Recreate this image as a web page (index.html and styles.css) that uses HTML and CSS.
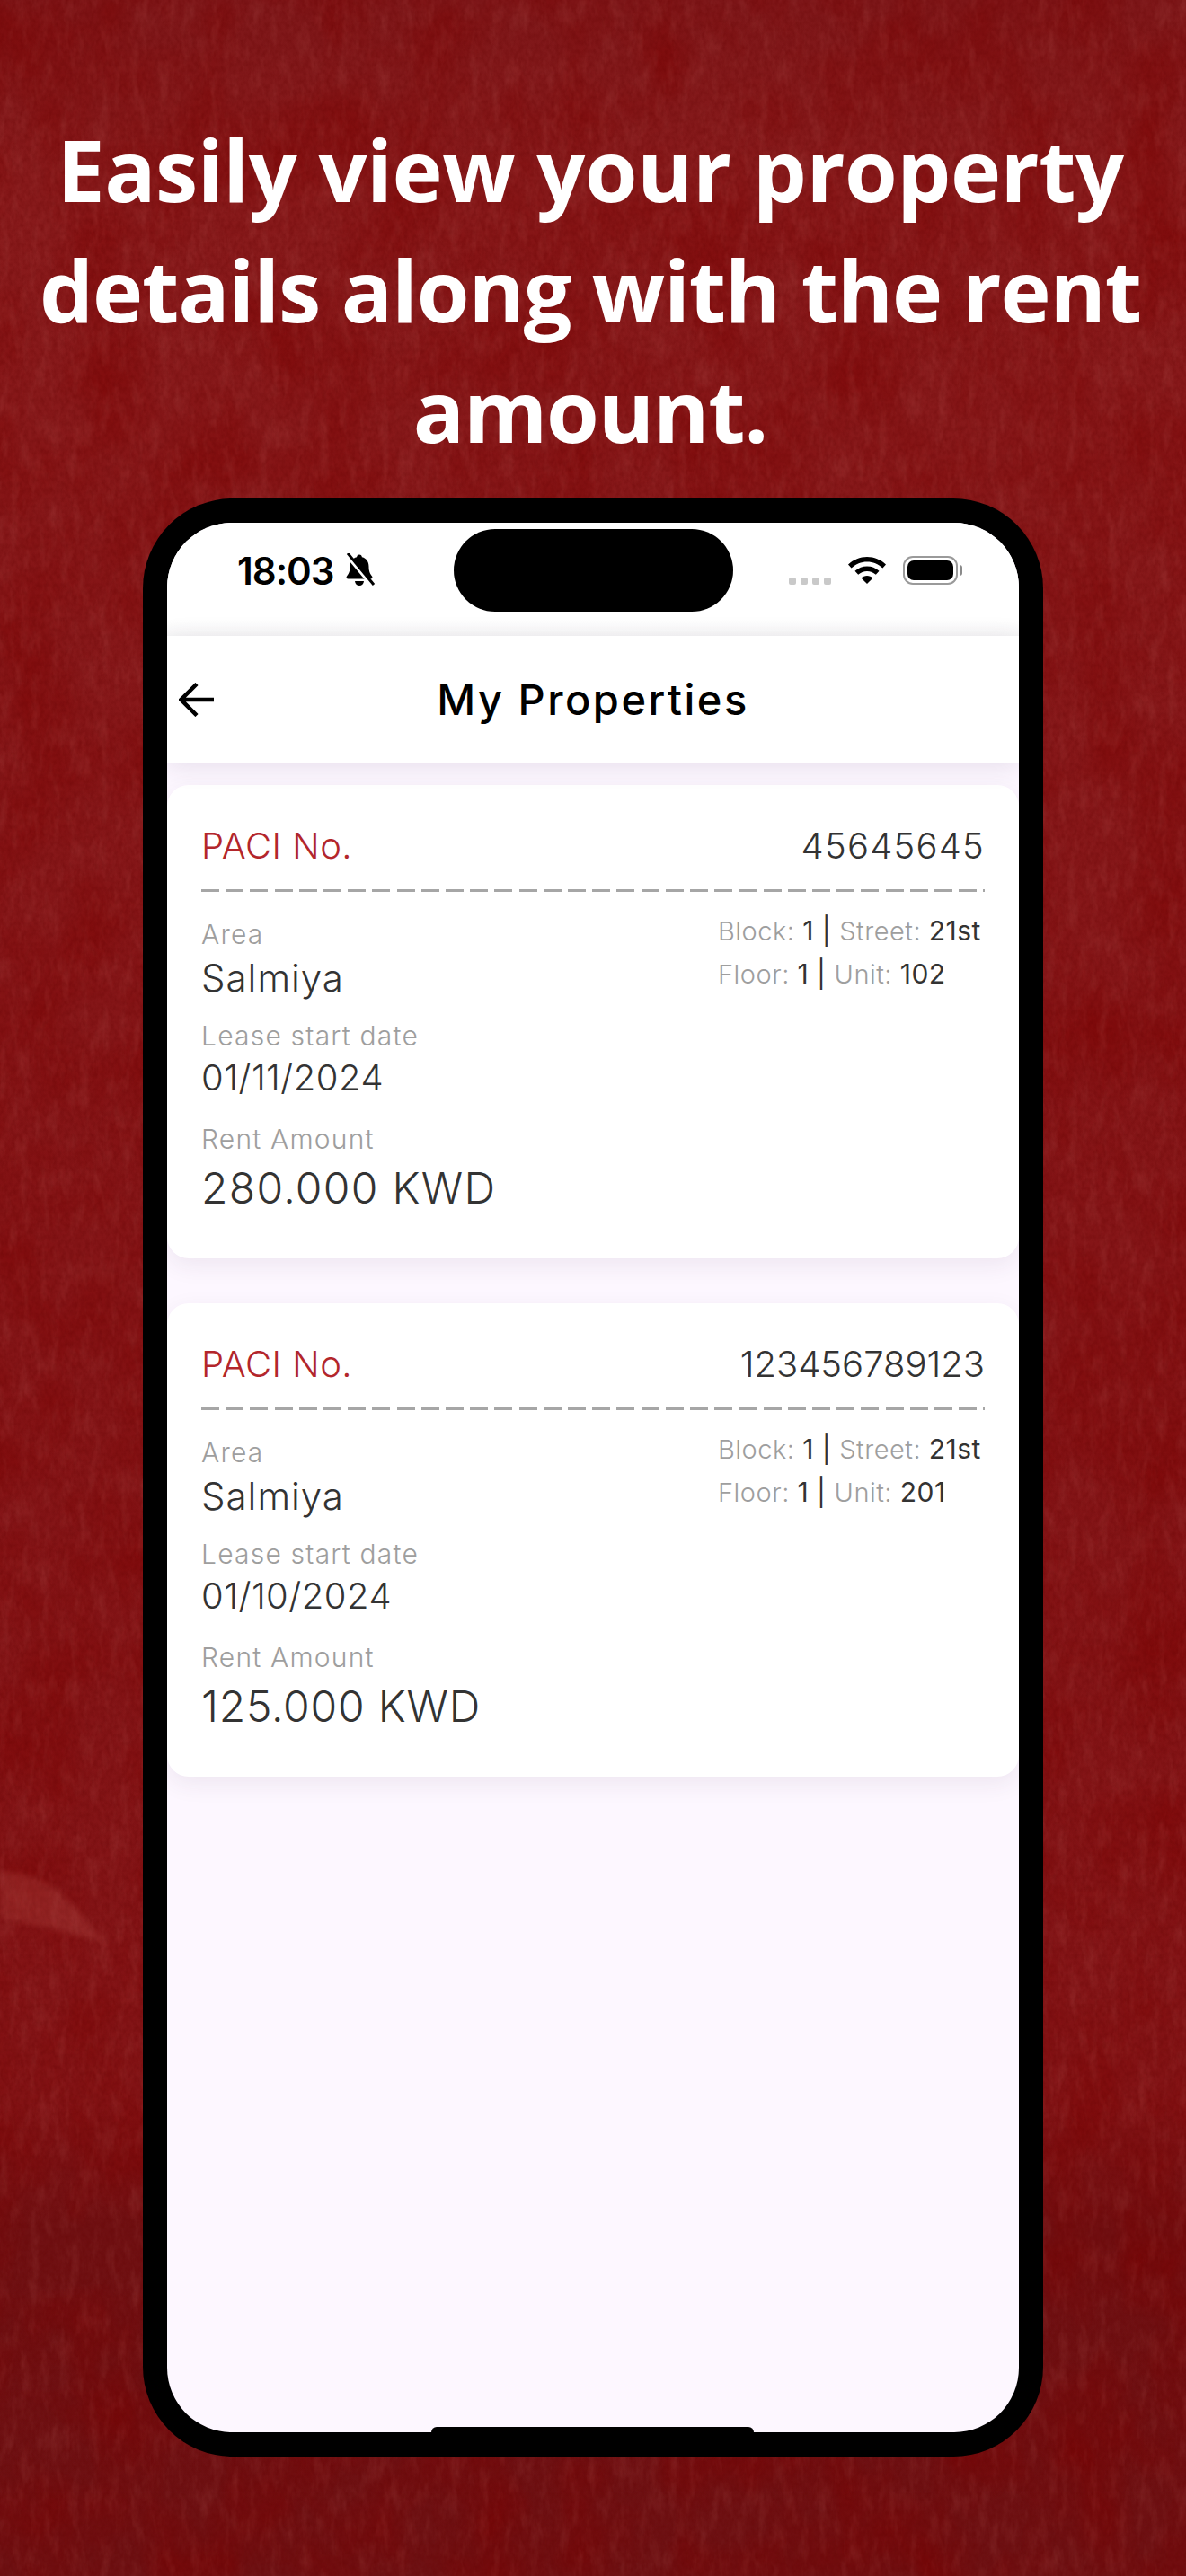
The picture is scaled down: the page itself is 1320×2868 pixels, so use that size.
FILE: index.html
```html
<!DOCTYPE html>
<html lang="en">
<head>
    <meta charset="UTF-8">
    <meta name="viewport" content="width=device-width, initial-scale=1.0">
    <title>My Properties</title>
    <link rel="stylesheet" href="styles.css">
</head>
<body>
    <!-- paper texture behind everything -->
    <svg class="texture" width="1320" height="2868">
        <filter id="grain" x="0" y="0" width="100%" height="100%">
            <feTurbulence type="fractalNoise" baseFrequency="0.22 0.16" numOctaves="3" seed="7"/>
            <feColorMatrix type="matrix" values="0 0 0 0 0.12  0 0 0 0 0  0 0 0 0 0  0.5 0 0 0 -0.16"/>
        </filter>
        <filter id="streak" x="0" y="0" width="100%" height="100%">
            <feTurbulence type="fractalNoise" baseFrequency="0.09 0.03" numOctaves="4" seed="21"/>
            <feColorMatrix type="matrix" values="0 0 0 0 0.62  0 0 0 0 0.2  0 0 0 0 0.18  0 0.3 0 0 -0.14"/>
        </filter>
        <filter id="blotch" x="0" y="0" width="100%" height="100%">
            <feTurbulence type="fractalNoise" baseFrequency="0.012 0.009" numOctaves="4" seed="4"/>
            <feColorMatrix type="matrix" values="0 0 0 0 0.2  0 0 0 0 0  0 0 0 0 0  0 0 1.1 0 -0.42"/>
        </filter>
        <filter id="soft" x="-20%" y="-20%" width="140%" height="140%">
            <feGaussianBlur stdDeviation="3"/>
        </filter>
        <rect width="1320" height="2868" filter="url(#blotch)"/>
        <rect width="1320" height="2868" filter="url(#grain)"/>
        <rect width="1320" height="2868" filter="url(#streak)"/>
        <path class="smudge" filter="url(#soft)" d="M0 2085C30 2080 60 2100 85 2125C105 2150 115 2165 132 2168C110 2160 70 2150 0 2135Z"/>
    </svg>

    <h1 class="headline"><span class="line-one">Easily view your property</span><br>details along with the rent<br>amount.</h1>

    <div class="phone">
        <div class="screen">
            <div class="status">
                <div class="status-left">
                    <span class="time">18:03</span>
                    <svg class="bell" viewBox="0 0 36 38" width="36" height="38">
                        <path d="M18 1.5c1.7 0 2.8 1.2 2.9 2.8 5 1.2 7.6 5.2 7.6 10.5 0 5.500 1.500 8.200 3.500 10.700 1.100 1.400.3 3-1.500 3H5.500c-1.800 0-2.600-1.600-1.500-3 2-2.500 3.500-5.200 3.500-10.700 0-5.300 2.600-9.300 7.600-10.500.1-1.600 1.200-2.800 2.900-2.800z"/>
                        <path d="M13 31h10c-.3 3-2.300 5-5 5s-4.700-2-5-5z"/>
                        <path class="bell-gap" d="M3 1l30 36"/>
                        <path class="bell-slash" d="M5 0l29 35"/>
                    </svg>
                </div>
                <div class="island"></div>
                <div class="status-right">
                    <div class="dots"><i></i><i></i><i></i><i></i></div>
                    <svg class="wifi" viewBox="0 0 42 30" width="42" height="30">
                        <path d="M21 0c8 0 15 3 21 8.500l-3.600 4C33.500 8 27.500 5.500 21 5.500S8.500 8 3.600 12.500L0 8.500C6 3 13 0 21 0z"/>
                        <path d="M21 10.500c5 0 9.500 1.800 13.500 5.300l-3.700 4c-2.800-2.500-6.100-3.800-9.800-3.800s-7 1.300-9.800 3.800l-3.700-4c4-3.500 8.500-5.300 13.500-5.300z"/>
                        <path d="M21 21c2.500 0 4.700.9 6.600 2.500L21 30l-6.600-6.500c1.900-1.600 4.100-2.500 6.600-2.500z"/>
                    </svg>
                    <div class="battery"><div class="battery-fill"></div></div>
                </div>
            </div>

            <div class="appbar">
                <svg class="back" viewBox="0 0 40 38" width="40" height="38">
                    <path d="M39 19H3M20 1.500L2.500 19 20 36.500"/>
                </svg>
                <span class="appbar-title">My Properties</span>
            </div>

            <div class="list">
                <div class="card">
                    <div class="card-head">
                        <span class="paci">PACI No.</span>
                        <span class="paci-no">45645645</span>
                    </div>
                    <div class="dash"></div>
                    <div class="details">
                        <div class="details-left">
                            <div class="label">Area</div>
                            <div class="value">Salmiya</div>
                            <div class="label label-lease">Lease start date</div>
                            <div class="value value-date">01/11/2024</div>
                            <div class="label label-rent">Rent Amount</div>
                            <div class="amount">280.000 KWD</div>
                        </div>
                        <div class="details-right">
                            <div>Block: <b>1 | </b>Street: <b>21st</b></div>
                            <div>Floor: <b>1 | </b>Unit: <b>102</b></div>
                        </div>
                    </div>
                </div>

                <div class="card">
                    <div class="card-head">
                        <span class="paci">PACI No.</span>
                        <span class="paci-no paci-no-long">123456789123</span>
                    </div>
                    <div class="dash"></div>
                    <div class="details">
                        <div class="details-left">
                            <div class="label">Area</div>
                            <div class="value">Salmiya</div>
                            <div class="label label-lease">Lease start date</div>
                            <div class="value value-date">01/10/2024</div>
                            <div class="label label-rent">Rent Amount</div>
                            <div class="amount amount-short">125.000 KWD</div>
                        </div>
                        <div class="details-right">
                            <div>Block: <b>1 | </b>Street: <b>21st</b></div>
                            <div>Floor: <b>1 | </b>Unit: <b>201</b></div>
                        </div>
                    </div>
                </div>
            </div>

            <div class="home-bar"></div>
        </div>
    </div>
</body>
</html>
```

FILE: styles.css
```css
html, body {
    margin: 0;
    padding: 0;
}

body {
    position: relative;
    width: 1320px;
    height: 2868px;
    overflow: hidden;
    font-family: "Inter", "Liberation Sans", sans-serif;
    background:
        linear-gradient(180deg, #7e1719 0, #881a1b 200px, #851517 1400px, #831416 2340px, #701012 2480px, #6e1113 2868px);
}

.texture {
    position: absolute;
    left: 0;
    top: 0;
}

.smudge {
    fill: rgba(200, 100, 90, 0.22);
}

.headline {
    position: relative;
    margin: 0;
    padding: 121px 6px 0 0;
    font-family: "Open Sans", sans-serif;
    font-size: 95px;
    font-weight: 700;
    line-height: 134px;
    letter-spacing: -1.150px;
    text-align: center;
    color: #fff;
}

.line-one {
    letter-spacing: -0.500px;
}

/* phone frame */
.phone {
    position: relative;
    box-sizing: border-box;
    width: 1002px;
    height: 2180px;
    margin: 32px auto 0;
    padding: 27px;
    background: #000;
    border-radius: 100px;
}

.screen {
    position: relative;
    display: flex;
    flex-direction: column;
    height: 100%;
    overflow: hidden;
    background: #fdf7ff;
    border-radius: 72px;
}

.status {
    display: flex;
    align-items: flex-start;
    box-sizing: border-box;
    height: 126px;
    padding: 7px 0 0 78px;
    background: linear-gradient(180deg, #fff 108px, #f8f8f8 126px);
}

.status-left {
    display: flex;
    align-items: center;
    gap: 11px;
    width: 241px;
    height: 92px;
}

.time {
    font-size: 42px;
    font-weight: 600;
    letter-spacing: -1px;
    color: #000;
}

.bell path {
    fill: #000;
}

.bell .bell-gap {
    fill: none;
    stroke: #fff;
    stroke-width: 4;
}

.bell .bell-slash {
    fill: none;
    stroke: #000;
    stroke-width: 3;
}

.island {
    width: 311px;
    height: 92px;
    background: #000;
    border-radius: 46px;
}

.status-right {
    display: flex;
    align-items: center;
    height: 92px;
    margin-left: 62px;
}

.dots {
    display: flex;
    gap: 5px;
    margin-top: 24px;
}

.dots i {
    width: 8px;
    height: 8px;
    background: #c9c9c9;
    border-radius: 2px;
}

.wifi {
    margin-left: 19px;
    fill: #000;
}

.battery {
    position: relative;
    box-sizing: border-box;
    width: 61px;
    height: 32px;
    margin-left: 19px;
    padding: 3px;
    border: 2px solid #9a9a9a;
    border-radius: 11px;
}

.battery::after {
    content: "";
    position: absolute;
    right: -7px;
    top: 8px;
    width: 3px;
    height: 12px;
    background: #8a8a8a;
    border-radius: 0 6px 6px 0;
}

.battery-fill {
    height: 100%;
    background: #000;
    border-radius: 7px;
}

/* top bar */
.appbar {
    position: relative;
    display: flex;
    align-items: center;
    justify-content: center;
    flex: none;
    height: 141px;
    background: #fff;
    box-shadow: 0 4px 26px rgba(60, 40, 80, 0.12);
}

.back {
    position: absolute;
    left: 13px;
    top: 52px;
    fill: none;
    stroke: #000;
    stroke-width: 4.500;
}

.appbar-title {
    font-size: 47px;
    font-weight: 500;
    color: #000;
    letter-spacing: 2.500px;
}

.list {
    display: flex;
    flex-direction: column;
    gap: 50px;
    padding-top: 25px;
}

.card {
    box-sizing: border-box;
    height: 527px;
    padding: 44px 38px 0 38px;
    background: #fff;
    border-radius: 24px;
    box-shadow: 0 8px 26px rgba(60, 40, 80, 0.08);
}

.card-head {
    display: flex;
    justify-content: space-between;
    font-size: 40px;
    font-weight: 300;
    line-height: 48px;
    letter-spacing: 0.500px;
}

.paci {
    color: #b3262b;
}

.paci-no {
    letter-spacing: 1.200px;
    color: #333;
}

.paci-no-long {
    letter-spacing: 0;
}

.dash {
    height: 3px;
    margin-top: 24px;
    background: repeating-linear-gradient(90deg, #a6a6a6 0, #a6a6a6 20px, transparent 20px, transparent 27.200px);
}

.details {
    display: flex;
    justify-content: space-between;
    margin-top: 20px;
}

.details-left {
    padding-top: 9px;
}

.label {
    font-size: 30px;
    font-weight: 300;
    line-height: 36px;
    letter-spacing: 1.200px;
    color: #9e9e9e;
}

.label-lease {
    margin-top: 22px;
}

.label-rent {
    margin-top: 26px;
}

.value {
    margin-top: 7px;
    font-size: 42px;
    font-weight: 300;
    line-height: 48px;
    letter-spacing: 1px;
    color: #333;
}

.value-date {
    margin-top: 5px;
    font-size: 40px;
    letter-spacing: 0.500px;
}

.amount {
    margin-top: 9px;
    font-size: 48px;
    font-weight: 300;
    line-height: 56px;
    letter-spacing: 1.300px;
    color: #333;
}

.amount-short {
    letter-spacing: 0.800px;
}

.details-right {
    width: 297px;
    font-size: 29px;
    font-weight: 300;
    line-height: 47.500px;
    letter-spacing: 0.500px;
    color: #9e9e9e;
    white-space: nowrap;
}

.details-right b {
    font-size: 30px;
    font-weight: 400;
    color: #333;
}

.home-bar {
    position: absolute;
    left: 294px;
    bottom: 0;
    width: 359px;
    height: 6px;
    background: #000;
    border-radius: 6px 6px 0 0;
}
```
